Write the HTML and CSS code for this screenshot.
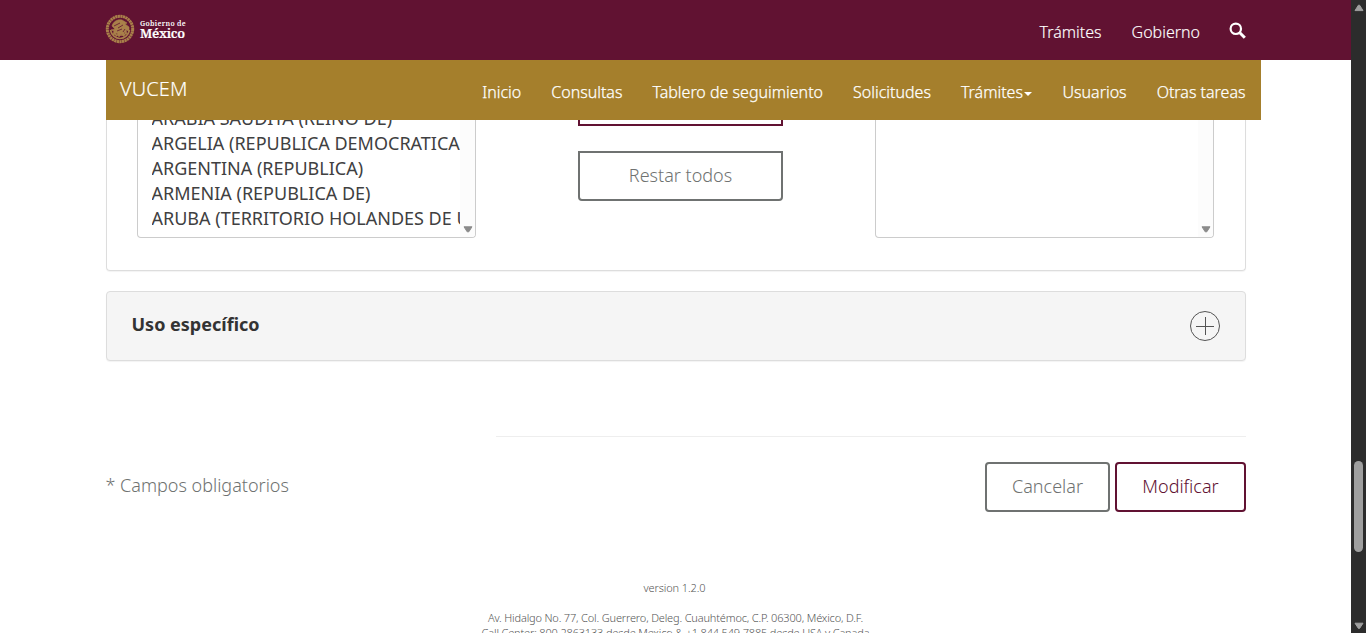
FILE: index.html
```html
<!DOCTYPE html>
<html lang="es">
<head>
<meta charset="utf-8">
<title>VUCEM</title>
<link rel="stylesheet" href="styles.css">
</head>
<body>
<div class="window">
  <div class="page">
    <header class="gov-bar">
      <a class="brand">
        <svg class="seal" viewBox="0 0 30 30" fill="none" stroke="#a9804a">
          <circle cx="15" cy="15" r="12.700" stroke-width="3" stroke-dasharray="2.200 .4"/>
          <path d="M7 12c1-4 5-7 10-6l5 3-2 1 4 3 0 4-3-1 1 4-3-2v4l-3-2-2 3-2-4-4 2 1-4-3-1 4-1z" fill="#a9804a" stroke-width=".6"/>
          <path d="M5.500 16c1 5 5 8.500 9.500 8.500s8.500-3.500 9.500-8.500M9 19l3 3M21 19l-3 3M11 21h8" stroke-width="1.700"/>
          <path d="M9 12l6-3M13 14l5-3M12 17l5-2M18 18l2-3" stroke="#611232" stroke-width=".8"/>
        </svg>
        <span class="brand-text"><span class="brand-small">Gobierno de</span><span class="brand-big">México</span></span>
      </a>
      <nav class="gov-nav">
        <a>Trámites</a><a>Gobierno</a>
        <svg class="search" viewBox="0 0 18 18" fill="none" stroke="#fff"><circle cx="6.800" cy="6.800" r="5.200" stroke-width="2.200"/><path d="M10.800 10.800l5 5" stroke-width="3"/></svg>
      </nav>
    </header>
    <div class="sub-bar">
      <a class="sub-title">VUCEM</a>
      <nav class="sub-nav"><a>Inicio</a><a>Consultas</a><a>Tablero de seguimiento</a><a>Solicitudes</a><a>Trámites<i class="caret"></i></a><a>Usuarios</a><a>Otras tareas</a></nav>
    </div>
    <main class="content">
      <section class="panel transfer">
        <div class="list">
          <ul class="options"><li>ARABIA SAUDITA (REINO DE)</li><li>ARGELIA (REPUBLICA DEMOCRATICA</li><li>ARGENTINA (REPUBLICA)</li><li>ARMENIA (REPUBLICA DE)</li><li>ARUBA (TERRITORIO HOLANDES DE ULTRAMAR)</li></ul>
          <div class="track"><svg viewBox="0 0 10 7"><path d="M1 .8h8l-3.200 5h-1.600z" fill="#8b8b8b" stroke="#8b8b8b" stroke-linejoin="round"/></svg></div>
        </div>
        <div class="actions">
          <div class="btn-edge"></div>
          <button class="btn restar">Restar todos</button>
        </div>
        <div class="list">
          <ul class="options"></ul>
          <div class="track"><svg viewBox="0 0 10 7"><path d="M1 .8h8l-3.200 5h-1.600z" fill="#8b8b8b" stroke="#8b8b8b" stroke-linejoin="round"/></svg></div>
        </div>
      </section>
      <section class="panel accordion">
        <h4>Uso específico</h4>
        <svg class="plus" viewBox="0 0 30 30" fill="none" stroke="#545454"><circle cx="15" cy="15" r="14.500"/><path d="M6 15.500h18M15.500 6v18"/></svg>
      </section>
      <hr class="rule">
      <div class="form-foot">
        <p class="required">* Campos obligatorios</p>
        <div class="buttons"><button class="btn cancel">Cancelar</button><button class="btn modify">Modificar</button></div>
      </div>
    </main>
    <footer class="footer">
      <p class="version">version 1.2.0</p>
      <p class="address">Av. Hidalgo No. 77, Col. Guerrero, Deleg. Cuauhtémoc, C.P. 06300, México, D.F.</p>
      <p class="phone">Call Center: 800 2863133 desde Mexico &amp; +1 844 549 7885 desde USA y Canada</p>
    </footer>
  </div>
  <div class="scrollbar">
    <svg viewBox="0 0 10 8"><path d="M4.400 1.200h1.200l3.400 5.400H1z" fill="#9f9f9f" stroke="#9f9f9f" stroke-linejoin="round"/></svg>
    <div class="thumb"></div>
    <svg viewBox="0 0 10 8"><path d="M4.400 6.400h1.200l3.400-5.200H1z" fill="#9f9f9f" stroke="#9f9f9f" stroke-linejoin="round"/></svg>
  </div>
</div>
</body>
</html>
```
FILE: styles.css
```css
* { box-sizing: border-box; }
body { margin: 0; background: #fff; font-family: "Noto Sans", sans-serif; color: #404041; }
p, h4, ul { margin: 0; padding: 0; }
.window { display: flex; width: 1366px; height: 633px; overflow: hidden; }
.page { width: 1351px; height: 633px; overflow: hidden; }
.gov-bar { display: flex; justify-content: space-between; height: 60px; padding: 0 104px 0 105px; background: #611232; color: #fff; }
.brand { display: flex; padding-top: 14px; }
.seal { width: 30px; height: 30px; }
.brand-text { display: flex; flex-direction: column; padding: 6px 0 0 5px; font-family: "Noto Serif", "Liberation Serif", serif; font-weight: 600; }
.brand-small { font-size: 7px; line-height: 8px; letter-spacing: .3px; }
.brand-big { font-size: 13px; line-height: 11px; letter-spacing: -.3px; -webkit-text-stroke: .2px #fff; }
.gov-nav { display: flex; gap: 30px; font-size: 16px; line-height: 24px; padding-top: 20px; font-weight: 300; -webkit-text-stroke: .15px #fff; }
.search { width: 18px; height: 18px; margin: 2px 0 0 -1px; }
.sub-bar { display: flex; justify-content: space-between; width: 1155px; height: 60px; margin-left: 106px; padding: 0 15.500px 0 14px; background: #a57f2c; color: #fff; }
.sub-title { font-size: 20px; line-height: 28px; padding-top: 15px; font-weight: 300; letter-spacing: .1px; -webkit-text-stroke: .15px #fff; }
.sub-nav { display: flex; gap: 30px; padding-top: 20px; font-size: 16px; line-height: 24px; font-weight: 300; white-space: nowrap; -webkit-text-stroke: .25px #fff; }
.caret { display: inline-block; margin-left: 1.500px; border: 4px solid transparent; border-top-color: #fff; border-bottom: 0; vertical-align: 2px; }
.content { width: 1140px; margin-left: 106px; }
.panel { border: 1px solid #ddd; border-radius: 4px; box-shadow: 0 1px 1px rgba(0,0,0,.05); }
.transfer { display: flex; height: 151px; padding: 0 31px 0 30px; border-top: 0; border-radius: 0 0 4px 4px; justify-content: space-between; }
.list { display: flex; width: 339px; height: 118px; border: 1px solid #ccc; border-top: 0; border-radius: 0 0 4px 4px; overflow: hidden; }
.options { flex: 1; margin-left: 13.500px; overflow: hidden; list-style: none; font-size: 18px; line-height: 25px; white-space: nowrap; }
.options li:first-child { margin-top: -14px; }
.track { width: 15px; background: #fcfcfc; display: flex; align-items: flex-end; padding-bottom: 4px; }
.track svg { width: 10px; height: 7px; margin-left: 2.500px; }
.actions { width: 205px; margin-right: -10px; }
.btn-edge { height: 6px; border: 2px solid #611232; border-top: 0; }
.btn { height: 50px; border: 2px solid #6f7271; border-radius: 4px; background: #fff; color: #6f7271; font: 300 18px/26px "Noto Sans", sans-serif; padding: 0 0 2px; }
.restar { width: 205px; margin-top: 25px; border-radius: 0 0 4px 4px; display: block; }
.accordion { display: flex; justify-content: space-between; height: 70px; margin-top: 20px; padding: 19px 25px; background: #f5f5f5; }
.accordion h4 { margin: -1px 0 0 -.5px; font-size: 18px; line-height: 28px; color: #333; }
.plus { width: 30px; height: 30px; }
.rule { width: 750px; height: 1px; border: 0; background: #eee; margin: 75px 0 25px auto; }
.form-foot { display: flex; justify-content: space-between; }
.required { margin-left: -.5px; font-size: 18px; line-height: 26px; padding-top: 10px; font-weight: 300; color: #6f7271; }
.buttons { display: flex; gap: 5px; }
.cancel { width: 125px; }
.modify { width: 131px; border-color: #611232; color: #611232; }
.footer { padding-top: 68px; text-align: center; font-size: 11px; line-height: 15px; font-weight: 300; letter-spacing: -.165px; color: #545454; }
.version { padding-right: 2px; letter-spacing: -.1px; }
.address { padding-top: 15px; }
.scrollbar { display: flex; flex-direction: column; align-items: center; width: 15px; height: 633px; padding: 4px 0 3px; background: #2c2c2c; }
.scrollbar svg { width: 10px; height: 8px; }
.thumb { width: 9px; height: 91px; margin: 449px 0 auto; border-radius: 5px; background: #9f9f9f; }
```
